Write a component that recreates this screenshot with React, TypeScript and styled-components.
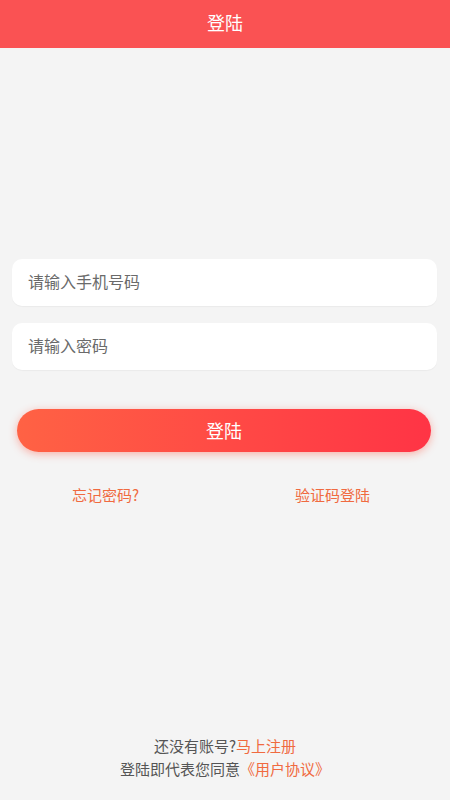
import React, { useState } from 'react';
import styled, { createGlobalStyle } from 'styled-components';

const GlobalStyle = createGlobalStyle`
  html, body {
    margin: 0;
    padding: 0;
    background: #f4f4f4;
    font-family: "Noto Sans CJK SC", "Noto Sans", sans-serif;
  }
  * { box-sizing: border-box; }
`;

const Page = styled.div`
  display: flex;
  flex-direction: column;
  height: 800px;
  background: #f4f4f4;
`;

const Header = styled.header`
  height: 48px;
  background: #fa5253;
  color: #fff;
  font-size: 18px;
  display: flex;
  align-items: center;
  justify-content: center;
  padding-bottom: 4px;
  flex-shrink: 0;
`;

const Form = styled.div`
  display: flex;
  flex-direction: column;
  padding: 211px 13px 0 12px;
  gap: 17px;
`;

const Field = styled.input`
  height: 47px;
  width: 100%;
  border: none;
  border-radius: 10px;
  background: #fff;
  box-shadow: 0 1px 1px rgba(0, 0, 0, 0.04);
  padding: 0 16px 3px;
  font-size: 16px;
  font-family: inherit;
  color: #333;
  outline: none;
  &::placeholder {
    color: #6a6a6a;
  }
`;

const SubmitButton = styled.button`
  margin: 39px 19px 0 17px;
  height: 43px;
  border: none;
  border-radius: 22px;
  background: linear-gradient(90deg, #ff6244 0%, #ff4a45 50%, #ff3445 100%);
  box-shadow: 0 2px 8px rgba(255, 90, 70, 0.45);
  color: #fff;
  font-size: 18px;
  font-family: inherit;
  padding-bottom: 2px;
  cursor: pointer;
`;

const Links = styled.div`
  display: flex;
  justify-content: space-between;
  padding: 0 80px 0 72px;
  margin-top: 32px;
`;

const LinkText = styled.span`
  color: #f06a40;
  font-size: 15px;
  cursor: pointer;
`;

const Spacer = styled.div`
  flex: 1;
`;

const Footer = styled.footer`
  display: flex;
  flex-direction: column;
  align-items: center;
  padding-bottom: 20px;
  font-size: 15px;
  line-height: 23px;
  color: #555;
`;

const Accent = styled.span`
  color: #f06a40;
`;

export default function App() {
  const [phone, setPhone] = useState('');
  const [password, setPassword] = useState('');

  return (
    <Page>
      <GlobalStyle />
      <Header>登陆</Header>
      <Form>
        <Field
          placeholder="请输入手机号码"
          value={phone}
          onChange={(e) => setPhone(e.target.value)}
        />
        <Field
          type="password"
          placeholder="请输入密码"
          value={password}
          onChange={(e) => setPassword(e.target.value)}
        />
      </Form>
      <SubmitButton>登陆</SubmitButton>
      <Links>
        <LinkText>忘记密码?</LinkText>
        <LinkText>验证码登陆</LinkText>
      </Links>
      <Spacer />
      <Footer>
        <div>
          还没有账号?<Accent>马上注册</Accent>
        </div>
        <div>
          登陆即代表您同意<Accent>《用户协议》</Accent>
        </div>
      </Footer>
    </Page>
  );
}
